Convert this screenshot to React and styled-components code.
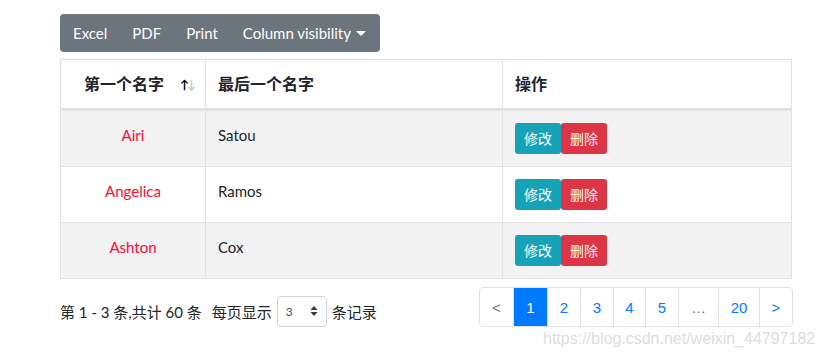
import React from "react";
import styled, { createGlobalStyle } from "styled-components";

const GlobalStyle = createGlobalStyle`
    body {
        margin: 0;
        background: #ffffff;
        font-family: "Source Sans Pro", Lato, "Noto Sans CJK SC", sans-serif;
        color: #212529;
    }
`;

const Page = styled.div`
    position: relative;
    width: 824px;
    height: 356px;
    padding: 14px 0 0 60px;
    box-sizing: border-box;
    overflow: hidden;
`;

const BtnGroup = styled.div`
    display: inline-flex;
    height: 38px;
    background-color: #6c757d;
    border-radius: 4px;
    overflow: hidden;
`;

const ToolBtn = styled.div`
    display: flex;
    align-items: center;
    padding: 0 ${(p) => (p.$last ? "14px" : "12px")} 0 13px;
    color: #ffffff;
    font-size: 15px;
`;

const Caret = styled.span`
    display: inline-block;
    margin-left: 5px;
    margin-top: 1px;
    border-top: 5px solid #ffffff;
    border-left: 5px solid transparent;
    border-right: 5px solid transparent;
`;

const Table = styled.table`
    margin-top: 7px;
    width: 731px;
    border-collapse: collapse;
    table-layout: fixed;
    font-size: 15px;
`;

const Th = styled.th`
    position: relative;
    height: 24px;
    padding: 12px ${(p) => (p.$sort ? "30px" : "12px")} 12px 12px;
    border: 1px solid #dee2e6;
    border-bottom: 3px solid #dee2e6;
    text-align: ${(p) => (p.$center ? "center" : "left")};
    font-weight: 700;
    font-size: 16px;
    line-height: 24px;
`;

const SortIcon = styled.span`
    position: absolute;
    right: 11px;
    top: 13px;
    font-size: 12px;
    font-weight: 700;
    letter-spacing: -2px;
    span:first-child {
        color: #000000;
    }
    span:last-child {
        color: #bfc4c9;
    }
`;

const Tr = styled.tr`
    background-color: ${(p) => (p.$striped ? "#f2f2f2" : "#ffffff")};
`;

const Td = styled.td`
    height: 31px;
    padding: 12px;
    border: 1px solid #dee2e6;
    vertical-align: top;
    text-align: ${(p) => (p.$center ? "center" : "left")};
    color: ${(p) => (p.$red ? "#ff0a32" : "#212529")};
    line-height: 24px;
`;

const Actions = styled.div`
    display: flex;
`;

const SmallBtn = styled.div`
    width: 46px;
    height: 31px;
    box-sizing: border-box;
    display: flex;
    align-items: center;
    justify-content: center;
    color: #ffffff;
    font-size: 14px;
    border-radius: 3px;
    background-color: ${(p) => p.$bg};
`;

const Footer = styled.div`
    display: flex;
    justify-content: space-between;
    align-items: center;
    width: 733px;
    margin-top: 8px;
`;

const Info = styled.div`
    display: flex;
    align-items: center;
    font-size: 15px;
    padding-top: 8px;
`;

const Gap = styled.span`
    display: inline-block;
    width: 10px;
`;

const Select = styled.div`
    display: flex;
    align-items: center;
    justify-content: space-between;
    width: 50px;
    height: 31px;
    box-sizing: border-box;
    margin: 0 5px 0 5px;
    padding: 0 8px 0 8px;
    border: 1px solid #ced4da;
    border-radius: 4px;
    font-size: 12px;
    color: #495057;
`;

const Pager = styled.div`
    display: flex;
    height: 38px;
    border: 1px solid #dee2e6;
    border-radius: 4px;
    overflow: hidden;
`;

const PageItem = styled.div`
    width: ${(p) => p.$w}px;
    display: flex;
    align-items: center;
    justify-content: center;
    box-sizing: border-box;
    border-left: ${(p) => (p.$first ? "none" : "1px solid #dee2e6")};
    background-color: ${(p) => (p.$active ? "#007bff" : "#ffffff")};
    color: ${(p) => (p.$active ? "#ffffff" : p.$muted ? "#6c757d" : "#007bff")};
    font-family: "Liberation Sans", Arial, sans-serif;
    font-size: 15px;
`;

const Watermark = styled.div`
    position: absolute;
    left: 543px;
    top: 330px;
    font-family: "Liberation Sans", Arial, sans-serif;
    font-size: 16px;
    color: #dcdcdc;
    white-space: nowrap;
`;

const rows = [
    ["Airi", "Satou"],
    ["Angelica", "Ramos"],
    ["Ashton", "Cox"],
];

const pages = [
    { t: "<", w: 33, muted: true },
    { t: "1", w: 34, active: true },
    { t: "2", w: 33 },
    { t: "3", w: 33 },
    { t: "4", w: 32 },
    { t: "5", w: 33 },
    { t: "…", w: 40, muted: true },
    { t: "20", w: 41 },
    { t: ">", w: 33 },
];

const App = () => {
    return (
        <Page>
            <GlobalStyle />
            <BtnGroup>
                <ToolBtn>Excel</ToolBtn>
                <ToolBtn>PDF</ToolBtn>
                <ToolBtn>Print</ToolBtn>
                <ToolBtn $last>
                    Column visibility
                    <Caret />
                </ToolBtn>
            </BtnGroup>
            <Table>
                <colgroup>
                    <col style={{ width: 145 }} />
                    <col style={{ width: 297 }} />
                    <col style={{ width: 289 }} />
                </colgroup>
                <thead>
                    <tr>
                        <Th $center $sort>
                            第一个名字
                            <SortIcon>
                                <span>↑</span>
                                <span>↓</span>
                            </SortIcon>
                        </Th>
                        <Th>最后一个名字</Th>
                        <Th>操作</Th>
                    </tr>
                </thead>
                <tbody>
                    {rows.map((r, i) => (
                        <Tr key={r[0]} $striped={i % 2 === 0}>
                            <Td $center $red>
                                {r[0]}
                            </Td>
                            <Td>{r[1]}</Td>
                            <Td>
                                <Actions>
                                    <SmallBtn $bg="#17a2b8">修改</SmallBtn>
                                    <SmallBtn $bg="#dc3545">删除</SmallBtn>
                                </Actions>
                            </Td>
                        </Tr>
                    ))}
                </tbody>
            </Table>
            <Footer>
                <Info>
                    第 1 - 3 条,共计 60 条
                    <Gap />
                    每页显示
                    <Select>
                        3
                        <svg width="8" height="12" viewBox="0 0 8 12">
                            <path d="M4 1 L7.5 5 H0.5 Z M4 11 L7.5 7 H0.5 Z" fill="#343a40" />
                        </svg>
                    </Select>
                    条记录
                </Info>
                <Pager>
                    {pages.map((p, i) => (
                        <PageItem key={i} $w={p.w} $first={i === 0} $active={p.active} $muted={p.muted}>
                            {p.t}
                        </PageItem>
                    ))}
                </Pager>
            </Footer>
            <Watermark>https://blog.csdn.net/weixin_44797182</Watermark>
        </Page>
    );
};

export default App;
